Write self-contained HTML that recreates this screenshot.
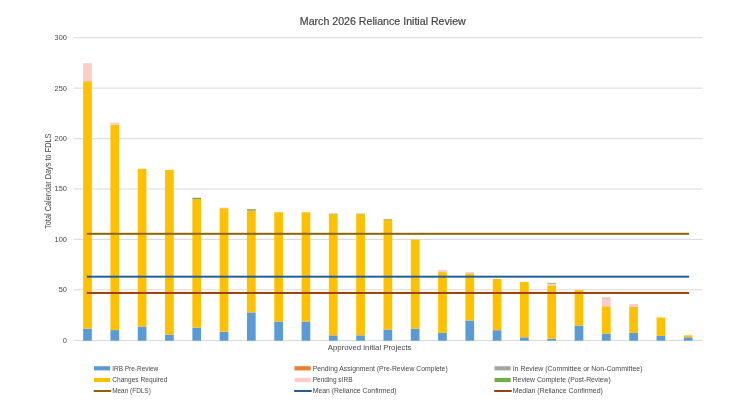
<!DOCTYPE html><html><head><meta charset="utf-8"><style>html,body{margin:0;padding:0;background:#fff;width:750px;height:400px;overflow:hidden}svg{display:block;filter:blur(0.3px)}text{font-family:"Liberation Sans",sans-serif;fill:#474747}</style></head><body>
<svg width="750" height="400" viewBox="0 0 750 400">
<rect width="750" height="400" fill="#fff"/>
<text x="299.8" y="24.5" font-size="10.4" stroke="#474747" stroke-width="0.2" textLength="166.0" lengthAdjust="spacingAndGlyphs">March 2026 Reliance Initial Review</text>
<rect x="73.90" y="339.95" width="628.50" height="1.1" fill="#DCDCDC"/>
<text x="66.9" y="343.00" font-size="7.4" text-anchor="end" fill="#5c5c5c">0</text>
<rect x="73.90" y="289.25" width="628.50" height="1.1" fill="#DCDCDC"/>
<text x="66.9" y="292.30" font-size="7.4" text-anchor="end" fill="#5c5c5c">50</text>
<rect x="73.90" y="238.85" width="628.50" height="1.1" fill="#DCDCDC"/>
<text x="66.9" y="241.90" font-size="7.4" text-anchor="end" fill="#5c5c5c">100</text>
<rect x="73.90" y="188.40" width="628.50" height="1.1" fill="#DCDCDC"/>
<text x="66.9" y="191.45" font-size="7.4" text-anchor="end" fill="#5c5c5c">150</text>
<rect x="73.90" y="138.15" width="628.50" height="1.1" fill="#DCDCDC"/>
<text x="66.9" y="141.20" font-size="7.4" text-anchor="end" fill="#5c5c5c">200</text>
<rect x="73.90" y="87.55" width="628.50" height="1.1" fill="#DCDCDC"/>
<text x="66.9" y="90.60" font-size="7.4" text-anchor="end" fill="#5c5c5c">250</text>
<rect x="73.90" y="37.05" width="628.50" height="1.1" fill="#DCDCDC"/>
<text x="66.9" y="40.10" font-size="7.4" text-anchor="end" fill="#5c5c5c">300</text>
<rect x="83.15" y="328.56" width="8.70" height="12.14" fill="#5B9BD5"/>
<rect x="83.15" y="81.19" width="8.70" height="247.37" fill="#FFC000"/>
<rect x="83.15" y="63.19" width="8.70" height="18.00" fill="#FFCCCC"/>
<rect x="110.46" y="330.08" width="8.70" height="10.62" fill="#5B9BD5"/>
<rect x="110.46" y="124.78" width="8.70" height="205.30" fill="#FFC000"/>
<rect x="110.46" y="122.56" width="8.70" height="2.22" fill="#FFCCCC"/>
<rect x="137.76" y="326.54" width="8.70" height="14.16" fill="#5B9BD5"/>
<rect x="137.76" y="168.87" width="8.70" height="157.67" fill="#FFC000"/>
<rect x="165.06" y="334.63" width="8.70" height="6.07" fill="#5B9BD5"/>
<rect x="165.06" y="169.89" width="8.70" height="164.75" fill="#FFC000"/>
<rect x="192.37" y="327.55" width="8.70" height="13.15" fill="#5B9BD5"/>
<rect x="192.37" y="199.32" width="8.70" height="128.24" fill="#FFC000"/>
<rect x="192.37" y="197.80" width="8.70" height="1.52" fill="#7FA04F"/>
<rect x="219.68" y="331.60" width="8.70" height="9.10" fill="#5B9BD5"/>
<rect x="219.68" y="208.22" width="8.70" height="123.38" fill="#FFC000"/>
<rect x="219.68" y="207.61" width="8.70" height="0.61" fill="#FFCCCC"/>
<rect x="246.98" y="312.38" width="8.70" height="28.32" fill="#5B9BD5"/>
<rect x="246.98" y="210.64" width="8.70" height="101.74" fill="#FFC000"/>
<rect x="246.98" y="209.23" width="8.70" height="1.42" fill="#7FA04F"/>
<rect x="274.28" y="321.48" width="8.70" height="19.22" fill="#5B9BD5"/>
<rect x="274.28" y="212.26" width="8.70" height="109.22" fill="#FFC000"/>
<rect x="301.59" y="321.48" width="8.70" height="19.22" fill="#5B9BD5"/>
<rect x="301.59" y="212.26" width="8.70" height="109.22" fill="#FFC000"/>
<rect x="328.89" y="335.34" width="8.70" height="5.36" fill="#5B9BD5"/>
<rect x="328.89" y="214.28" width="8.70" height="121.06" fill="#FFC000"/>
<rect x="328.89" y="213.68" width="8.70" height="0.61" fill="#7FA04F"/>
<rect x="356.20" y="335.34" width="8.70" height="5.36" fill="#5B9BD5"/>
<rect x="356.20" y="214.28" width="8.70" height="121.06" fill="#FFC000"/>
<rect x="356.20" y="213.68" width="8.70" height="0.61" fill="#7FA04F"/>
<rect x="383.50" y="329.58" width="8.70" height="11.12" fill="#5B9BD5"/>
<rect x="383.50" y="219.64" width="8.70" height="109.93" fill="#FFC000"/>
<rect x="383.50" y="219.04" width="8.70" height="0.61" fill="#7FA04F"/>
<rect x="410.81" y="328.56" width="8.70" height="12.14" fill="#5B9BD5"/>
<rect x="410.81" y="239.57" width="8.70" height="89.00" fill="#FFC000"/>
<rect x="438.11" y="332.91" width="8.70" height="7.79" fill="#5B9BD5"/>
<rect x="438.11" y="272.13" width="8.70" height="60.78" fill="#FFC000"/>
<rect x="438.11" y="269.91" width="8.70" height="2.22" fill="#FFCCCC"/>
<rect x="465.42" y="320.47" width="8.70" height="20.23" fill="#5B9BD5"/>
<rect x="465.42" y="273.35" width="8.70" height="47.13" fill="#FFC000"/>
<rect x="465.42" y="271.93" width="8.70" height="1.42" fill="#FFCCCC"/>
<rect x="492.72" y="330.18" width="8.70" height="10.52" fill="#5B9BD5"/>
<rect x="492.72" y="279.01" width="8.70" height="51.17" fill="#FFC000"/>
<rect x="520.03" y="337.36" width="8.70" height="3.34" fill="#5B9BD5"/>
<rect x="520.03" y="282.04" width="8.70" height="55.32" fill="#FFC000"/>
<rect x="547.33" y="338.68" width="8.70" height="2.02" fill="#5B9BD5"/>
<rect x="547.33" y="285.38" width="8.70" height="53.30" fill="#FFC000"/>
<rect x="547.33" y="283.56" width="8.70" height="1.82" fill="#FFCCCC"/>
<rect x="547.33" y="282.85" width="8.70" height="0.71" fill="#7FA04F"/>
<rect x="574.64" y="325.53" width="8.70" height="15.17" fill="#5B9BD5"/>
<rect x="574.64" y="290.13" width="8.70" height="35.40" fill="#FFC000"/>
<rect x="601.94" y="333.62" width="8.70" height="7.08" fill="#5B9BD5"/>
<rect x="601.94" y="306.31" width="8.70" height="27.31" fill="#FFC000"/>
<rect x="601.94" y="298.33" width="8.70" height="7.99" fill="#FFCCCC"/>
<rect x="601.94" y="297.72" width="8.70" height="0.61" fill="#7FA04F"/>
<rect x="629.25" y="332.91" width="8.70" height="7.79" fill="#5B9BD5"/>
<rect x="629.25" y="306.82" width="8.70" height="26.09" fill="#FFC000"/>
<rect x="629.25" y="303.99" width="8.70" height="2.83" fill="#FFCCCC"/>
<rect x="656.55" y="335.95" width="8.70" height="4.75" fill="#5B9BD5"/>
<rect x="656.55" y="317.44" width="8.70" height="18.51" fill="#FFC000"/>
<rect x="683.86" y="337.36" width="8.70" height="3.34" fill="#5B9BD5"/>
<rect x="683.86" y="335.34" width="8.70" height="2.02" fill="#FFC000"/>
<rect x="86.80" y="232.80" width="602.30" height="2" fill="#8F6500"/>
<rect x="86.80" y="275.68" width="602.30" height="2" fill="#245E96"/>
<rect x="86.80" y="291.97" width="602.30" height="2" fill="#9C410E"/>
<text transform="translate(51.3,181.2) rotate(-90)" x="0" y="0" font-size="9.4" text-anchor="middle" textLength="95.5" lengthAdjust="spacingAndGlyphs">Total Calendar Days to FDLS</text>
<text x="327.8" y="350.1" font-size="7.8" textLength="83.7" lengthAdjust="spacingAndGlyphs">Approved initial Projects</text>
<rect x="94.00" y="366.20" width="16.2" height="4.2" fill="#5B9BD5"/>
<text x="112.20" y="370.55" font-size="6.7" textLength="46.1" lengthAdjust="spacingAndGlyphs">IRB Pre-Review</text>
<rect x="294.50" y="366.20" width="16.2" height="4.2" fill="#ED7D31"/>
<text x="312.70" y="370.55" font-size="6.7" textLength="135.0" lengthAdjust="spacingAndGlyphs">Pending Assignment (Pre-Review Complete)</text>
<rect x="494.50" y="366.20" width="16.2" height="4.2" fill="#A5A5A5"/>
<text x="512.70" y="370.55" font-size="6.7" textLength="129.8" lengthAdjust="spacingAndGlyphs">In Review (Committee or Non-Committee)</text>
<rect x="94.00" y="377.90" width="16.2" height="4.2" fill="#FFC000"/>
<text x="112.20" y="382.25" font-size="6.7" textLength="55.2" lengthAdjust="spacingAndGlyphs">Changes Required</text>
<rect x="294.50" y="377.90" width="16.2" height="4.2" fill="#FFCCCC"/>
<text x="312.70" y="382.25" font-size="6.7" textLength="39.8" lengthAdjust="spacingAndGlyphs">Pending sIRB</text>
<rect x="494.50" y="377.90" width="16.2" height="4.2" fill="#70AD47"/>
<text x="512.70" y="382.25" font-size="6.7" textLength="98.1" lengthAdjust="spacingAndGlyphs">Review Complete (Post-Review)</text>
<rect x="93.70" y="390.00" width="17.5" height="2" fill="#8F6500"/>
<text x="112.20" y="393.25" font-size="6.7" textLength="38.6" lengthAdjust="spacingAndGlyphs">Mean (FDLS)</text>
<rect x="294.20" y="390.00" width="17.5" height="2" fill="#245E96"/>
<text x="312.70" y="393.25" font-size="6.7" textLength="83.8" lengthAdjust="spacingAndGlyphs">Mean (Reliance Confirmed)</text>
<rect x="494.20" y="390.00" width="17.5" height="2" fill="#9C410E"/>
<text x="512.70" y="393.25" font-size="6.7" textLength="90.2" lengthAdjust="spacingAndGlyphs">Median (Reliance Confirmed)</text>
</svg></body></html>
